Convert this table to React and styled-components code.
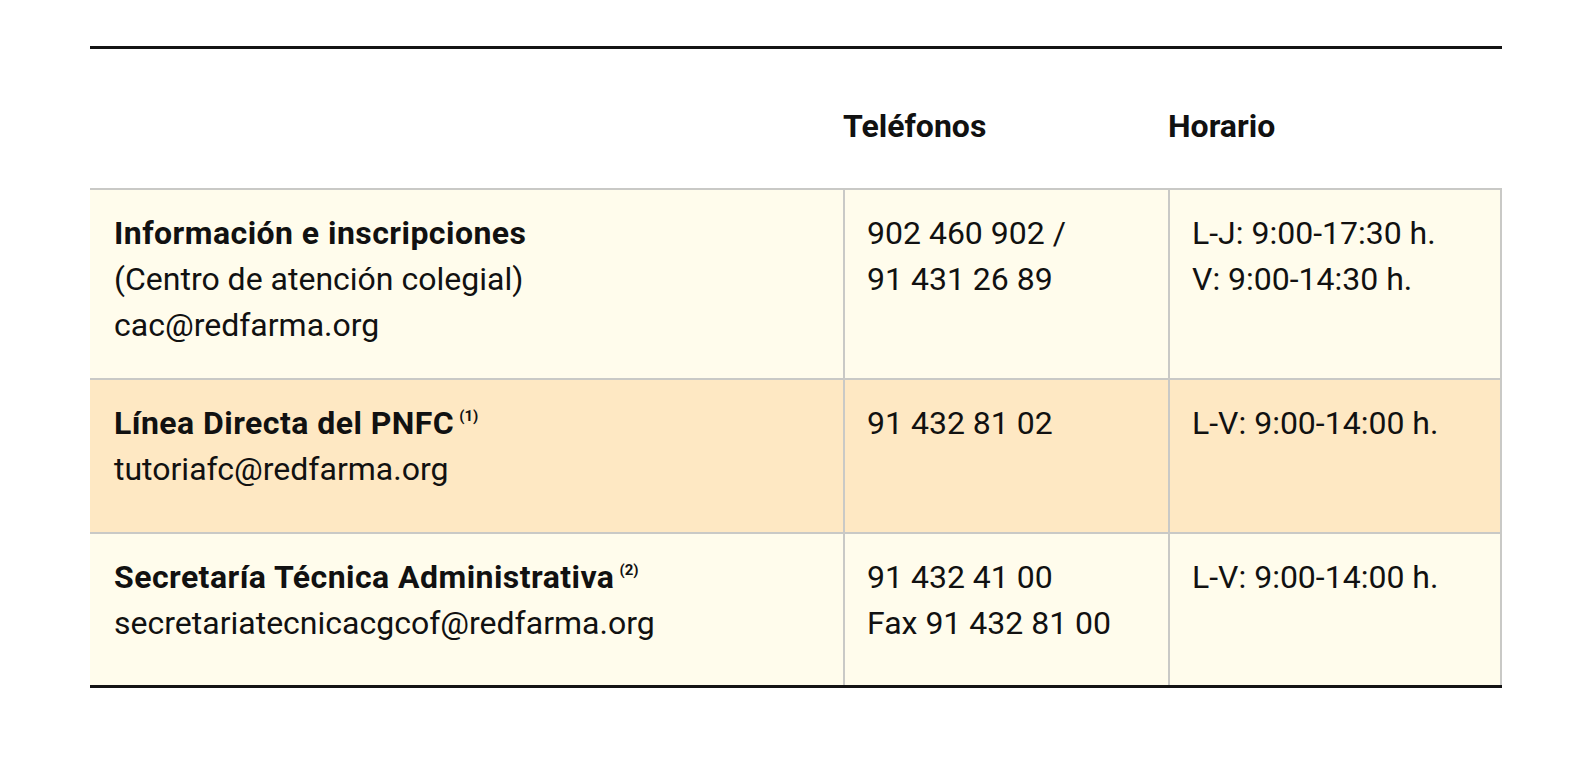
import React from 'react';
import styled, { createGlobalStyle } from 'styled-components';

const GlobalStyle = createGlobalStyle`
  html, body {
    margin: 0;
    padding: 0;
    background: #ffffff;
  }
  body {
    font-family: Roboto, "Liberation Sans", sans-serif;
    color: #111111;
  }
`;

const Page = styled.div`
  padding: 46px 72px 0 90px;
`;

const Table = styled.div`
  display: grid;
  grid-template-columns: 753px 325px 334px;
  width: 1412px;
  border-top: 3px solid #141414;
  border-bottom: 3px solid #141414;
`;

const HeadCell = styled.div`
  height: 139px;
  box-sizing: border-box;
  padding-top: 54px;
  font-size: 32px;
  line-height: 46px;
  font-weight: 700;
`;

const Cell = styled.div`
  background: ${({ $tone }) => ($tone === 'orange' ? '#fee8c3' : '#fffcec')};
  border-top: 2px solid #c9c9c6;
  border-left: ${({ $first }) => ($first ? 'none' : '2px solid #c9c9c6')};
  border-right: ${({ $last }) => ($last ? '2px solid #c9c9c6' : 'none')};
  padding: 20px 24px ${({ $pb }) => $pb}px;
  padding-left: ${({ $first }) => ($first ? 24 : 22)}px;
  font-size: 32px;
  line-height: 46px;
`;

const Line = styled.div`
  font-weight: ${({ $bold }) => ($bold ? 700 : 400)};
  letter-spacing: ${({ $bold }) => ($bold ? '0.45px' : '0')};
  white-space: nowrap;
`;

const Note = styled.sup`
  font-size: 15px;
  font-weight: 700;
  line-height: 0;
  letter-spacing: 0;
  margin-left: 5px;
  position: relative;
  top: -1px;
`;

const rows = [
  {
    tone: 'cream',
    pb: 30,
    name: 'Información e inscripciones',
    extra: ['(Centro de atención colegial)', 'cac@redfarma.org'],
    phones: ['902 460 902 /', '91 431 26 89'],
    hours: ['L-J: 9:00-17:30 h.', 'V: 9:00-14:30 h.'],
  },
  {
    tone: 'orange',
    pb: 40,
    name: 'Línea Directa del PNFC',
    note: '(1)',
    extra: ['tutoriafc@redfarma.org'],
    phones: ['91 432 81 02'],
    hours: ['L-V: 9:00-14:00 h.'],
  },
  {
    tone: 'cream',
    pb: 39,
    name: 'Secretaría Técnica Administrativa',
    note: '(2)',
    extra: ['secretariatecnicacgcof@redfarma.org'],
    phones: ['91 432 41 00', 'Fax 91 432 81 00'],
    hours: ['L-V: 9:00-14:00 h.'],
  },
];

const App = () => {
  return (
    <>
      <GlobalStyle />
      <Page>
        <Table>
          <HeadCell />
          <HeadCell>Teléfonos</HeadCell>
          <HeadCell>Horario</HeadCell>

          {rows.map((row) => (
            <React.Fragment key={row.name}>
              <Cell $tone={row.tone} $pb={row.pb} $first>
                <Line $bold>
                  {row.name}
                  {row.note && <Note>{row.note}</Note>}
                </Line>
                {row.extra.map((t) => (
                  <Line key={t}>{t}</Line>
                ))}
              </Cell>
              <Cell $tone={row.tone} $pb={row.pb}>
                {row.phones.map((t) => (
                  <Line key={t}>{t}</Line>
                ))}
              </Cell>
              <Cell $tone={row.tone} $pb={row.pb} $last>
                {row.hours.map((t) => (
                  <Line key={t}>{t}</Line>
                ))}
              </Cell>
            </React.Fragment>
          ))}
        </Table>
      </Page>
    </>
  );
};

export default App;
